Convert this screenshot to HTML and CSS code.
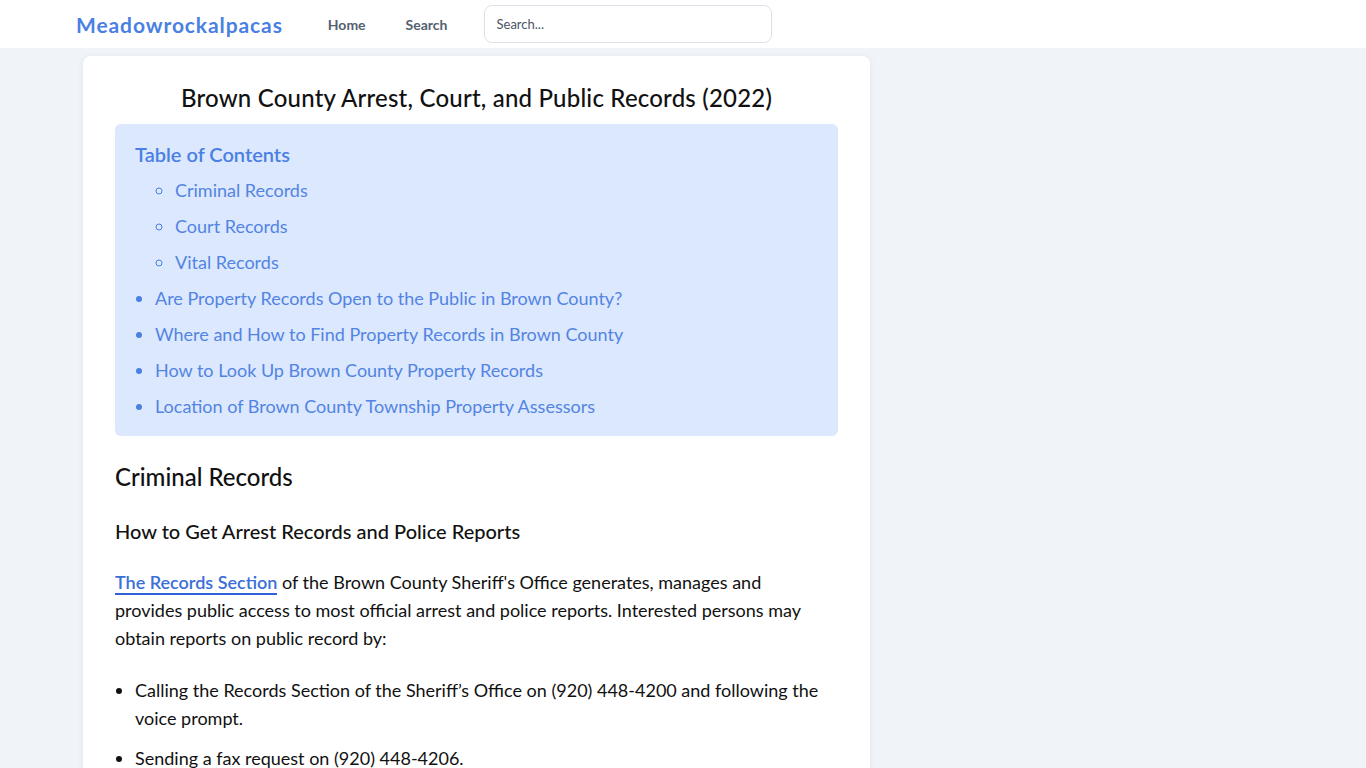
FILE: index.html
```html
<!DOCTYPE html>
<html lang="en">
<head>
    <meta charset="UTF-8">
    <meta name="viewport" content="width=device-width, initial-scale=1.0">
    <title>Brown County Arrest, Court, and Public Records (2022)</title>
    <link rel="stylesheet" href="styles.css">
</head>
<body>
    <header class="topbar">
        <a class="brand" href="#">Meadowrockalpacas</a>
        <nav class="nav">
            <a href="#">Home</a>
            <a href="#">Search</a>
        </nav>
        <input class="search" type="text" placeholder="Search...">
    </header>

    <main class="page">
        <article class="card">
            <h1>Brown County Arrest, Court, and Public Records (2022)</h1>

            <div class="toc">
                <p class="toc-title">Table of Contents</p>
                <ul class="toc-list">
                    <li class="toc-sub">
                        <ul>
                            <li><a href="#">Criminal Records</a></li>
                            <li><a href="#">Court Records</a></li>
                            <li><a href="#">Vital Records</a></li>
                        </ul>
                    </li>
                    <li><a href="#">Are Property Records Open to the Public in Brown County?</a></li>
                    <li><a href="#">Where and How to Find Property Records in Brown County</a></li>
                    <li><a href="#">How to Look Up Brown County Property Records</a></li>
                    <li><a href="#">Location of Brown County Township Property Assessors</a></li>
                </ul>
            </div>

            <h2>Criminal Records</h2>
            <h3>How to Get Arrest Records and Police Reports</h3>
            <p><a class="inline-link" href="#">The Records Section</a> of the Brown County Sheriff's Office generates, manages and provides public access to most official arrest and police reports. Interested persons may obtain reports on public record by:</p>
            <ul class="bullets">
                <li>Calling the Records Section of the Sheriff’s Office on (920) 448-4200 and following the voice prompt.</li>
                <li>Sending a fax request on (920) 448-4206.</li>
                <li>Visiting the Records Section in person during regular business hours.</li>
            </ul>
        </article>
    </main>
</body>
</html>
```

FILE: styles.css
```css
body {
    margin: 0;
    font-family: 'Lato', 'Noto Sans', sans-serif;
    background-color: #f0f4f8;
    color: #111111;
}
a {
    text-decoration: none;
}
.topbar {
    display: flex;
    align-items: center;
    height: 48px;
    padding: 0 0 0 76px;
    background-color: #ffffff;
}
.brand {
    font-size: 21px;
    font-weight: 700;
    color: #4a7fe3;
    letter-spacing: 0.9px;
}
.nav {
    display: flex;
    gap: 40px;
    margin-left: 45px;
}
.nav a {
    font-size: 14px;
    font-weight: 700;
    color: #556070;
}
.search {
    margin-left: 36px;
    width: 288px;
    height: 38px;
    box-sizing: border-box;
    padding: 0 12px;
    border: 1px solid #dde2ea;
    border-radius: 8px;
    font-family: inherit;
    font-size: 13px;
}
.search::placeholder {
    color: #4b5563;
}
.page {
    padding: 8px 0 0 83px;
}
.card {
    width: 787px;
    box-sizing: border-box;
    padding: 24px 32px 32px;
    background-color: #ffffff;
    border-radius: 8px;
    box-shadow: 0 1px 6px rgba(30, 50, 90, 0.08);
}
h1 {
    margin: 0 0 8px;
    text-align: center;
    font-size: 24px;
    font-weight: 500;
    line-height: 36px;
    letter-spacing: 0.2px;
}
.toc {
    padding: 16px 20px 12px;
    background-color: #dbe8fe;
    border-radius: 6px;
}
.toc-title {
    margin: 0 0 4px;
    font-size: 20px;
    font-weight: 600;
    color: #4a7fe3;
    line-height: 28px;
}
.toc-list {
    margin: 0;
    padding-left: 20px;
    color: #4a7fe3;
}
.toc-list ul {
    margin: 0;
    padding-left: 20px;
    list-style-type: circle;
}
.toc-sub {
    list-style: none;
}
.toc-list li {
    font-size: 18px;
    line-height: 36px;
}
.toc-list a {
    color: #5384e2;
}
h2 {
    margin: 23px 0 0;
    font-size: 24px;
    font-weight: 500;
    line-height: 36px;
}
h3 {
    margin: 21px 0 0;
    font-size: 20px;
    font-weight: 500;
    line-height: 30px;
}
p {
    max-width: 700px;
    margin: 22px 0 0;
    font-size: 18px;
    line-height: 28px;
}
.inline-link {
    color: #3b6fd8;
    font-weight: 600;
    border-bottom: 2px solid #2f62d6;
}
.bullets {
    margin: 24px 0 0;
    padding-left: 20px;
}
.bullets li {
    font-size: 18px;
    line-height: 28px;
    margin-bottom: 12px;
}
```
